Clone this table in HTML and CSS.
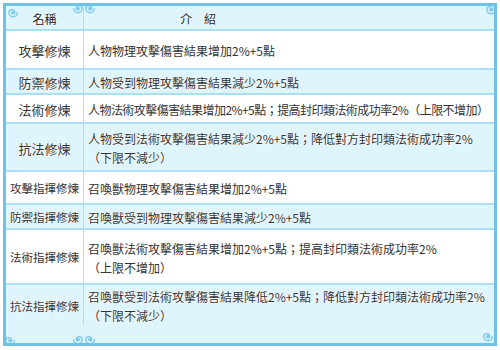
FILE: index.html
```html
<!DOCTYPE html>
<html lang="zh-Hant">
<head>
<meta charset="utf-8">
<link rel="stylesheet" href="styles.css">
</head>
<body>
<svg width="0" height="0" class="defs">
  <defs>
    <symbol id="sw" viewBox="0 0 12 12">
      <path d="M6 6 m0.8 0 a0.8 0.8 0 0 0 -1.6 0 a1.6 1.6 0 0 0 3.2 0 a3.2 3.2 0 0 0 -6.4 0 a4.6 4.6 0 0 0 9.2 0" fill="none" stroke="#7cc9e8" stroke-width="1.5" stroke-linecap="round"/>
    </symbol>
  </defs>
</svg>
<div class="frame">
  <div class="row blue h-head">
    <div class="name head">名稱</div>
    <div class="desc head-desc">介　紹</div>
  </div>
  <div class="row h1">
    <div class="name big">攻擊修煉</div>
    <div class="desc">人物物理攻擊傷害結果增加2%+5點</div>
  </div>
  <div class="row blue h2">
    <div class="name big">防禦修煉</div>
    <div class="desc">人物受到物理攻擊傷害結果減少2%+5點</div>
  </div>
  <div class="row h3">
    <div class="name big">法術修煉</div>
    <div class="desc tight">人物法術攻擊傷害結果增加2%+5點；提高封印類法術成功率2%（上限不增加）</div>
  </div>
  <div class="row blue h4">
    <div class="name big">抗法修煉</div>
    <div class="desc"><span>人物受到法術攻擊傷害結果減少2%+5點；降低對方封印類法術成功率2%</span><span>（下限不減少）</span></div>
  </div>
  <div class="row h5">
    <div class="name">攻擊指揮修煉</div>
    <div class="desc">召喚獸物理攻擊傷害結果增加2%+5點</div>
  </div>
  <div class="row blue h6">
    <div class="name">防禦指揮修煉</div>
    <div class="desc">召喚獸受到物理攻擊傷害結果減少2%+5點</div>
  </div>
  <div class="row h7">
    <div class="name">法術指揮修煉</div>
    <div class="desc"><span>召喚獸法術攻擊傷害結果增加2%+5點；提高封印類法術成功率2%</span><span>（上限不增加）</span></div>
  </div>
  <div class="row blue last">
    <div class="name">抗法指揮修煉</div>
    <div class="desc"><span>召喚獸受到法術攻擊傷害結果降低2%+5點；降低對方封印類法術成功率2%</span><span>（下限不減少）</span></div>
  </div>

  <svg class="deco d-tl" viewBox="0 0 12 12"><use href="#sw"/></svg>
  <svg class="deco d-tm1" viewBox="0 0 12 12"><use href="#sw"/></svg>
  <svg class="deco d-tm2" viewBox="0 0 12 12"><use href="#sw"/></svg>
  <svg class="deco d-tr" viewBox="0 0 12 12"><use href="#sw"/></svg>
  <svg class="deco d-bl" viewBox="0 0 12 12"><use href="#sw"/></svg>
  <svg class="deco d-bm1" viewBox="0 0 12 12"><use href="#sw"/></svg>
  <svg class="deco d-bm2" viewBox="0 0 12 12"><use href="#sw"/></svg>
  <svg class="deco d-br" viewBox="0 0 12 12"><use href="#sw"/></svg>
</div>
</body>
</html>
```
FILE: styles.css
```css
html, body {
  margin: 0;
  background: #ffffff;
}
body {
  font-family: "Noto Sans CJK TC", "Noto Sans CJK SC", "Noto Sans", sans-serif;
  color: #333333;
  font-size: 12px;
}
.defs {
  position: absolute;
}
.frame {
  position: relative;
  margin: 3px 0 0 3px;
  width: 488px;
  height: 337px;
  border: 3px solid #6ec3e3;
  display: flex;
  flex-direction: column;
  overflow: hidden;
  background: #ffffff;
}
.row {
  display: flex;
  border-bottom: 2px solid #aadff4;
  flex: none;
}
.row.blue {
  background: #dff5fd;
}
.row.last {
  border-bottom: none;
  flex: 1;
  padding-bottom: 18px;
}
.h-head { height: 23px; }
.h1 { height: 37px; }
.h2 { height: 23px; }
.h3 { height: 27px; }
.h4 { height: 46px; }
.h5 { height: 31px; }
.h6 { height: 23px; }
.h7 { height: 53px; }
.name {
  width: 77px;
  flex: none;
  border-right: 1px solid #aadff4;
  display: flex;
  align-items: center;
  justify-content: center;
  font-size: 11.5px;
  white-space: nowrap;
  text-shadow: 0 0 2px #fff, 0 0 1px #fff, 0 0 1px #fff;
  padding-top: 1px;
}
.name.big {
  font-size: 13px;
  padding-top: 2px;
}
.name.head {
  font-size: 12px;
  color: #222;
}
.desc {
  flex: 1;
  min-width: 0;
  padding-left: 4px;
  padding-top: 2px;
  display: flex;
  flex-direction: column;
  justify-content: center;
  line-height: 19px;
  white-space: nowrap;
  text-shadow: 0 0 2px #fff, 0 0 1px #fff, 0 0 1px #fff;
}
.desc.tight {
  letter-spacing: -0.55px;
}
.head-desc {
  padding-left: 96px;
  color: #222;
}
.deco {
  position: absolute;
  width: 11px;
  height: 11px;
}
.d-tl { left: 1px; top: 1px; }
.d-tm1 { left: 67px; top: -3px; transform: scaleX(-1); }
.d-tm2 { left: 78px; top: -3px; }
.d-tr { right: -2px; top: -2px; }
.d-bl { left: -2px; bottom: -3px; }
.d-bm1 { left: 67px; bottom: -2px; transform: scaleX(-1); }
.d-bm2 { left: 78px; bottom: -2px; }
.d-br { right: 1px; bottom: 1px; }
```
